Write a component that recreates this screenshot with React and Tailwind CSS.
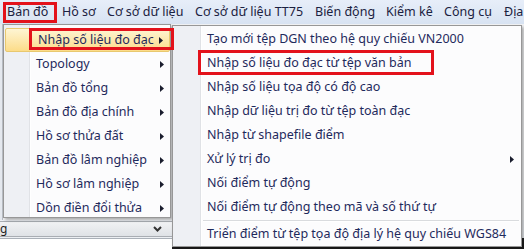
import React from "react";

const font = "font-['Noto_Sans','Open_Sans',sans-serif]";

const Arrow = () => (
  <svg width="4" height="7" viewBox="0 0 4 7" className="shrink-0">
    <path d="M0 0 L4 3.5 L0 7 Z" fill="#1a1d2e" />
  </svg>
);

const topItems = [
  ["Bản đồ", 55],
  ["Hồ sơ", 45],
  ["Cơ sở dữ liệu", 88],
  ["Cơ sở dữ liệu TT75", 120],
  ["Biến động", 71],
  ["Kiểm kê", 58],
  ["Công cụ", 60],
  ["Địa", 20],
];

const leftItems = [
  "Nhập số liệu đo đạc",
  "Topology",
  "Bản đồ tổng",
  "Bản đồ địa chính",
  "Hồ sơ thửa đất",
  "Bản đồ lâm nghiệp",
  "Hồ sơ lâm nghiệp",
  "Dồn điền đổi thửa",
];

const subItems = [
  ["Tạo mới tệp DGN theo hệ quy chiếu VN2000", false],
  ["Nhập số liệu đo đạc từ tệp văn bản", false],
  ["Nhập số liệu tọa độ có độ cao", false],
  ["Nhập dữ liệu trị đo từ tệp toàn đạc", false],
  ["Nhập từ shapefile điểm", false],
  ["Xử lý trị đo", true],
  ["Nối điểm tự động", false],
  ["Nối điểm tự động theo mã và số thứ tự", false],
];

export default function App() {
  return (
    <div className={`relative w-[524px] h-[249px] overflow-hidden bg-[#eceff3] ${font}`}>
      {/* thanh menu */}
      <div className="flex items-center h-[24px] pl-[7px] bg-gradient-to-b from-[#e7eef9] to-[#d8e3f2] text-[12.5px] text-[#1b2140] whitespace-nowrap">
        {topItems.map(([label, w]) => (
          <span key={label} className="shrink-0" style={{ width: w }}>
            {label}
          </span>
        ))}
      </div>

      {/* phần nền của cửa sổ phía sau */}
      <div className="flex flex-col h-[225px]">
        <div className="flex-1 flex">
          <div className="w-[3px] border-r border-[#b9bec6] bg-[#e4e8ee]" />
          <div className="flex-1 bg-[#f3f4f6]" />
        </div>
        <div className="h-[16px] mt-[1px] flex items-center justify-between border-y border-[#a9adb3] bg-gradient-to-b from-[#f1f2f4] to-[#dfe2e6] text-[12px] text-[#222] w-[172px]">
          <span className="leading-none">g</span>
          <svg width="9" height="6" viewBox="0 0 9 6" className="mr-[10px]">
            <path d="M1 1 L4.5 4.5 L8 1" stroke="#333" strokeWidth="2" fill="none" />
          </svg>
        </div>
        <div className="h-[11px] mt-[1px] flex">
          <div className="w-[172px] bg-white border-t border-[#aab0b8]" />
          <div className="flex-1 bg-[#1e1e1e]" />
        </div>
      </div>

      {/* menu Bản đồ */}
      <div className="absolute left-[3px] top-[24px] w-[168px] h-[194px] border border-[#979797] shadow-[2px_2px_3px_rgba(0,0,0,0.3)] bg-[linear-gradient(to_right,#eef0f4_0,#eef0f4_25px,#e0e2e6_25px,#e0e2e6_26px,#ffffff_26px,#ffffff_27px,#fcfcfd_27px)] pt-[3px] text-[12.5px] text-[#1f2a5c]">
        {leftItems.map((label, i) => (
          <div
            key={label}
            className={`h-[24px] flex items-center justify-between pl-[32px] pr-[6px] ${
              i === 0
                ? "ml-[1px] pl-[31px] rounded-[2px] border border-[#e8c86f] bg-gradient-to-b from-[#fef5d3] to-[#fcdc88]"
                : ""
            }`}
          >
            <span>{label}</span>
            <Arrow />
          </div>
        ))}
      </div>

      {/* menu con */}
      <div className="absolute left-[172px] top-[25px] w-[350px] h-[222px] border border-[#979797] shadow-[2px_2px_3px_rgba(0,0,0,0.3)] bg-[linear-gradient(to_right,#eef0f4_0,#eef0f4_27px,#e0e2e6_27px,#e0e2e6_28px,#ffffff_28px,#ffffff_29px,#fcfcfd_29px)] pt-[1px] text-[12.5px] text-[#1f2a5c] whitespace-nowrap">
        {subItems.map(([label, arrow]) => (
          <div key={label} className="h-[24px] flex items-center justify-between pl-[34px] pr-[7px]">
            <span>{label}</span>
            {arrow && <Arrow />}
          </div>
        ))}
        <div className="h-[3px] ml-[30px] mr-[2px] flex flex-col justify-center">
          <div className="h-px bg-[#d9dbde]" />
          <div className="h-px bg-white" />
        </div>
        <div className="h-[24px] flex items-center pl-[34px]">
          <span>Triển điểm từ tệp tọa độ địa lý hệ quy chiếu WGS84</span>
        </div>
      </div>

      {/* khung đỏ đánh dấu */}
      <div className="absolute left-[3px] top-[2px] w-[54px] h-[21px] border-[3px] border-[#e3121b]" />
      <div className="absolute left-[29px] top-[28px] w-[145px] h-[22px] border-[3px] border-[#e3121b]" />
      <div className="absolute left-[198px] top-[50px] w-[236px] h-[25px] border-[3px] border-[#e3121b]" />
    </div>
  );
}
